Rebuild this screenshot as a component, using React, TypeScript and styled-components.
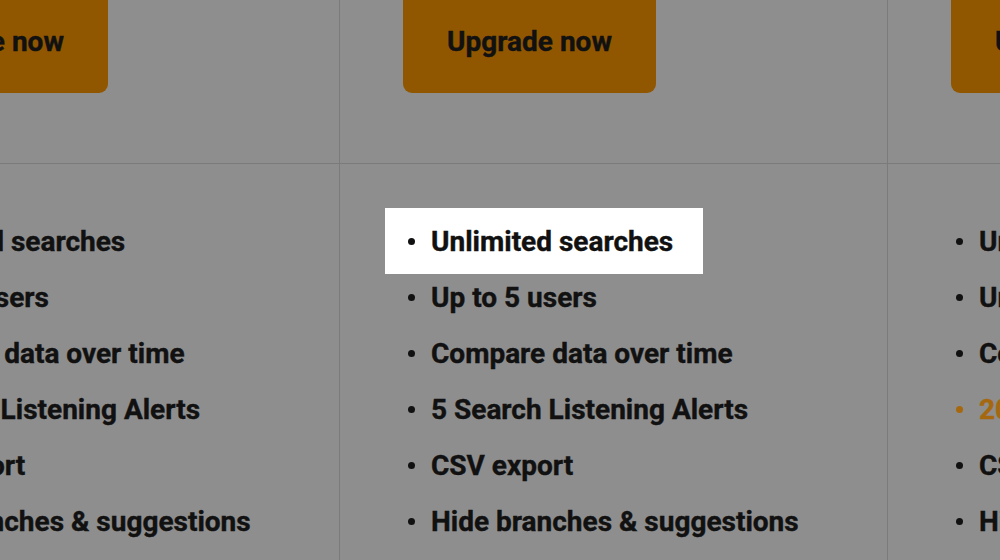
import React from "react";
import styled, { createGlobalStyle } from "styled-components";

interface Plan {
  features: { text: string; accent?: boolean; spotlight?: boolean }[];
}

const plans: Plan[] = [
  {
    features: [
      { text: "Unlimited searches" },
      { text: "Up to 5 users" },
      { text: "Compare data over time" },
      { text: "5 Search Listening Alerts" },
      { text: "CSV export" },
      { text: "Hide branches & suggestions" },
    ],
  },
  {
    features: [
      { text: "Unlimited searches", spotlight: true },
      { text: "Up to 5 users" },
      { text: "Compare data over time" },
      { text: "5 Search Listening Alerts" },
      { text: "CSV export" },
      { text: "Hide branches & suggestions" },
    ],
  },
  {
    features: [
      { text: "Unlimited searches" },
      { text: "Unlimited users" },
      { text: "Compare data over time" },
      { text: "20 Search Listening Alerts", accent: true },
      { text: "CSV export" },
      { text: "Hide branches & suggestions" },
    ],
  },
];

const App: React.FC = () => {
  return (
    <>
      <GlobalStyle />
      <Viewport>
        <Table>
          {plans.map((plan, i) => (
            <Column key={i}>
              <Header>
                <UpgradeButton>Upgrade now</UpgradeButton>
              </Header>
              <Features>
                {plan.features.map((f, j) => (
                  <Feature key={j} $accent={f.accent} $spotlight={f.spotlight}>
                    {f.text}
                  </Feature>
                ))}
              </Features>
            </Column>
          ))}
        </Table>
      </Viewport>
    </>
  );
};
export default App;

const GlobalStyle = createGlobalStyle`
  html, body {
    margin: 0;
    padding: 0;
    background: #8e8e8e;
    overflow: hidden;
  }
  body {
    font-family: Roboto, "Liberation Sans", sans-serif;
  }
`;

const Viewport = styled.div`
  width: 1000px;
  height: 560px;
  overflow: hidden;
  background: #8e8e8e;
`;

const Table = styled.div`
  display: grid;
  grid-template-columns: repeat(3, 548px);
  margin-left: -208px;
  margin-top: -39px;
`;

const Column = styled.div`
  border-right: 1px solid #7b7b7b;
  min-height: 640px;
`;

const Header = styled.div`
  height: 203px;
  padding: 30px 0 0 63px;
  box-sizing: border-box;
  border-bottom: 1px solid #7b7b7b;
`;

const UpgradeButton = styled.button`
  width: 253px;
  height: 102px;
  padding: 0 0 2px;
  border: none;
  border-radius: 9px;
  background: #915700;
  color: #111;
  font-family: Roboto, "Liberation Sans", sans-serif;
  font-size: 28px;
  font-weight: 700;
  -webkit-text-stroke: 0.4px #111;
  cursor: pointer;
`;

const Features = styled.ul`
  list-style: none;
  margin: 0;
  padding: 49px 0 0 63px;
`;

const Feature = styled.li<{ $accent?: boolean; $spotlight?: boolean }>`
  display: flex;
  align-items: center;
  width: fit-content;
  height: 56px;
  font-size: 28px;
  font-weight: 700;
  color: ${(p) => (p.$accent ? "#a6680f" : "#111")};
  -webkit-text-stroke: 0.4px currentColor;
  white-space: nowrap;
  background: ${(p) => (p.$spotlight ? "#fff" : "transparent")};
  margin: ${(p) => (p.$spotlight ? "-5px -30px -5px -18px" : "0")};
  padding: ${(p) => (p.$spotlight ? "5px 30px 5px 18px" : "0")};
  &::before {
    content: "";
    width: 7px;
    height: 7px;
    border-radius: 50%;
    background: currentColor;
    margin: 0 16px 0 5px;
    flex-shrink: 0;
  }
`;
